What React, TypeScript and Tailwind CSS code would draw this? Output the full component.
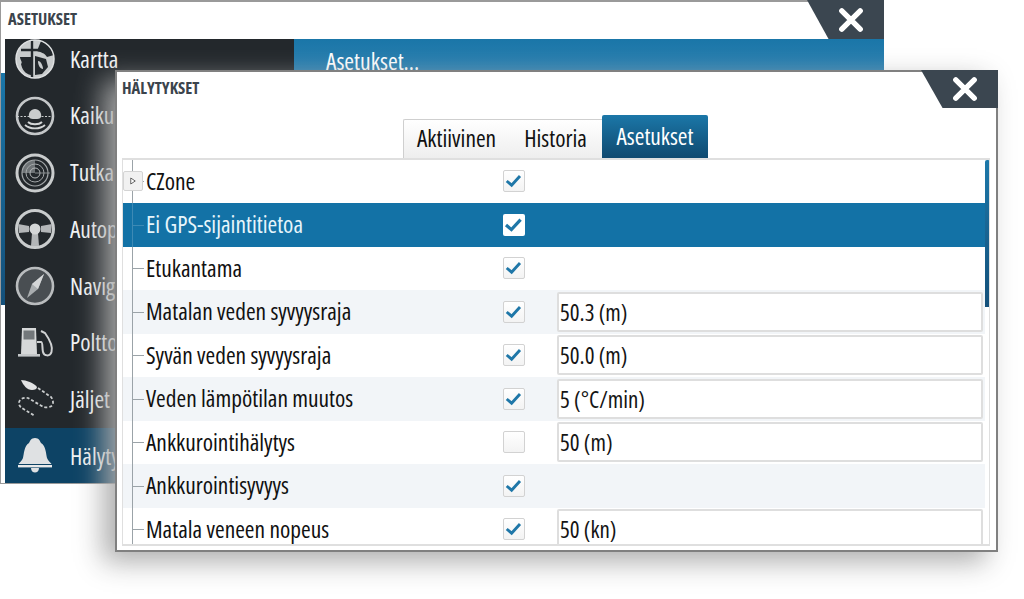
import React from 'react'

const BODY = "font-['Open_Sans','Noto_Sans',sans-serif] [font-stretch:75%]"

interface Row {
  label: string
  checked: boolean
  value?: string
}

const ROWS: Row[] = [
  { label: 'CZone', checked: true },
  { label: 'Ei GPS-sijaintitietoa', checked: true },
  { label: 'Etukantama', checked: true },
  { label: 'Matalan veden syvyysraja', checked: true, value: '50.3 (m)' },
  { label: 'Syvän veden syvyysraja', checked: true, value: '50.0 (m)' },
  { label: 'Veden lämpötilan muutos', checked: true, value: '5 (°C/min)' },
  { label: 'Ankkurointihälytys', checked: false, value: '50 (m)' },
  { label: 'Ankkurointisyvyys', checked: true },
  { label: 'Matala veneen nopeus', checked: true, value: '50 (kn)' },
]

// Sidebar icons, all drawn in a 44x44 box centred on the icon
function MapIcon() {
  return (
    <svg viewBox="0 0 44 44" className="w-[44px] h-[44px]">
      <circle cx="22" cy="22" r="19" fill="#c9cccd" />
      <path d="M28 4 C34 6 39 11 41 18 L34 20 C32 16 27 15 24 14 Z" fill="#23282c" />
      <path d="M7 20 L18 20 L18 38 C12 37 9 32 8 27 C10 25 7 23 7 20 Z" fill="#23282c" />
      <path d="M22 19 L33 22 L35 30 L29 37 L22 38 Z" fill="#23282c" />
      <path d="M25 24 C28 24 30 29 30 32 C27 32 25 28 25 24 Z" fill="#c9cccd" />
      <path d="M19 3 L19 41 M8 13 L33 13" stroke="#23282c" strokeWidth="2.4" />
      <circle cx="22" cy="22" r="19" fill="none" stroke="#dfe1e2" strokeWidth="1.5" />
    </svg>
  )
}

function SonarIcon() {
  return (
    <svg viewBox="0 0 44 44" className="w-[44px] h-[44px]">
      <circle cx="22" cy="22" r="18" fill="none" stroke="#c4c7c9" strokeWidth="2.6" />
      <path d="M16 23 C15 19 18 15 22 15 C26 15 29 19 28 23 C27 25 25 25 22 25 C19 25 17 25 16 23 Z" fill="#c9cccd" />
      <path d="M4 22.5 L40 22.5" stroke="#c9cccd" strokeWidth="1" strokeDasharray="2 1.5" />
      <path d="M15 28 C18 31 26 31 29 28 M12 31 C17 35.5 27 35.5 32 31" fill="none" stroke="#d4d6d7" strokeWidth="1.8" />
    </svg>
  )
}

function RadarIcon() {
  return (
    <svg viewBox="0 0 44 44" className="w-[44px] h-[44px]">
      <circle cx="22" cy="22" r="18" fill="none" stroke="#c9cccd" strokeWidth="3" />
      <path d="M22 22 L22 9 A13 13 0 0 0 9 22 Z" fill="#6f7477" />
      <circle cx="22" cy="22" r="13" fill="none" stroke="#a3a7a9" strokeWidth="1.2" />
      <circle cx="22" cy="22" r="9" fill="none" stroke="#a3a7a9" strokeWidth="1" />
      <circle cx="22" cy="22" r="5" fill="none" stroke="#b4b7b9" strokeWidth="1" />
      <path d="M22 22 L37 22" stroke="#9a9ea1" strokeWidth="0.8" />
    </svg>
  )
}

function WheelIcon() {
  return (
    <svg viewBox="0 0 44 44" className="w-[44px] h-[44px]">
      <circle cx="22" cy="22" r="18.5" fill="none" stroke="#c9cccd" strokeWidth="3" />
      <path d="M5 17 L16 19 L16 25 L6 26 Z M39 17 L28 19 L28 25 L38 26 Z" fill="#b3b6b8" />
      <path d="M19 26 L25 26 L26 39 L18 39 Z" fill="#b3b6b8" />
      <circle cx="22" cy="22" r="5.5" fill="#d4d6d7" />
    </svg>
  )
}

function CompassIcon() {
  return (
    <svg viewBox="0 0 44 44" className="w-[44px] h-[44px]">
      <circle cx="22" cy="22" r="18" fill="#494e52" stroke="#b9bcbe" strokeWidth="2.6" />
      <path d="M31 10 L25 25 L14 34 L19 20 Z" fill="#a9adaf" />
      <path d="M31 10 L19 20 L25 25 Z" fill="#d4d6d7" />
    </svg>
  )
}

function FuelIcon() {
  return (
    <svg viewBox="0 0 44 44" className="w-[44px] h-[44px]">
      <path d="M9 7 L23 7 L24 33 L8 33 Z" fill="#d6d8d9" />
      <rect x="10.5" y="9.5" width="11" height="9" fill="#73787b" />
      <rect x="5" y="33" width="22" height="2.6" fill="#c4c7c9" />
      <path d="M24 21 L28 21 C30 21 29 27 30 31 C31 35 37 36 38.5 31 C40 26 37 19 32 12 L28 10" fill="none" stroke="#d0d2d3" strokeWidth="2" />
    </svg>
  )
}

function TrackIcon() {
  return (
    <svg viewBox="0 0 44 44" className="w-[44px] h-[44px]">
      <path d="M8 3 C13 3 21 6 24 10 C24 12 22 13 19 13 C14 13 10 8 8 3 Z" fill="#e2e3e4" />
      <path d="M25 11 L38 20 C41 24 41 29 36 30 C33 31 30 30 27 28 L15 21 C11 20 6 22 6 26 C6 30 9 31 12 33 L22 39" fill="none" stroke="#c9cccd" strokeWidth="1.8" strokeDasharray="3 2" />
    </svg>
  )
}

function BellIcon() {
  return (
    <svg viewBox="0 0 44 44" className="w-[44px] h-[44px]">
      <path d="M22 4 C26 4 27 7 28 9 C33 12 33 20 34 24 C35 27 38 29 38.5 30 L5.5 30 C6 29 9 27 10 24 C11 20 11 12 16 9 C17 7 18 4 22 4 Z" fill="#dfe1e3" />
      <rect x="5" y="31" width="34" height="2.4" fill="#e8e9ea" />
      <path d="M18 34 L26 34 C26 37 24 38.5 22 38.5 C20 38.5 18 37 18 34 Z" fill="#dfe1e3" />
    </svg>
  )
}

const MENU = [
  { label: 'Kartta', icon: <MapIcon /> },
  { label: 'Kaiku', icon: <SonarIcon /> },
  { label: 'Tutka', icon: <RadarIcon /> },
  { label: 'Autopilotti', icon: <WheelIcon /> },
  { label: 'Navigointi', icon: <CompassIcon /> },
  { label: 'Polttoaine', icon: <FuelIcon /> },
  { label: 'Jäljet', icon: <TrackIcon /> },
  { label: 'Hälytykset', icon: <BellIcon />, active: true },
]

function CloseMark() {
  return (
    <svg viewBox="0 0 24 24" className="w-[26px] h-[26px]">
      <path d="M3.5 3.5 L20.5 20.5 M20.5 3.5 L3.5 20.5" stroke="#fff" strokeWidth="5" strokeLinecap="round" />
    </svg>
  )
}

function Checkbox({ checked, selected }: { checked: boolean; selected: boolean }) {
  return (
    <div
      className={`w-[22px] h-[22px] rounded-[2px] ${
        selected ? 'bg-white' : 'border border-[#d2d2d2] bg-gradient-to-b from-white to-[#f3f3f3]'
      }`}
    >
      {checked && (
        <svg viewBox="0 0 22 22" className="w-full h-full">
          <path d="M3 11 L8.4 15.6 L17.6 5.6" fill="none" stroke="#1f77a8" strokeWidth="3.2" />
        </svg>
      )}
    </div>
  )
}

export default function App() {
  return (
    <div className={`relative w-[1024px] h-[599px] overflow-hidden bg-white ${BODY}`}>
      {/* Back window */}
      <div className="absolute left-0 top-0 w-[884px] h-[484px] flex flex-col bg-white border-l border-t-2 border-b border-[#9a9a9a]">
        <div className="h-[37px] shrink-0 pl-[7px] pt-[7px] text-[16.5px] leading-[20px] font-bold text-[#3b444c]">ASETUKSET</div>
        <div className="flex-1 flex min-h-0">
          <div className="w-[4px] shrink-0 pt-[34px]">
            <div className="h-[232px] bg-gradient-to-b from-[#1a76a8] to-[#14507a]" />
          </div>
          <div className="w-[289px] shrink-0 bg-[#23282c] overflow-hidden">
            <div className="-mt-[8px]">
              {MENU.map((m) => (
                <div
                  key={m.label}
                  className={`h-[56.7px] flex items-center pl-[8px] gap-[13px] text-[23.4px] text-[#f1f3f4] ${
                    m.active ? 'bg-[#0d4365]' : ''
                  }`}
                >
                  {m.icon}
                  <span>{m.label}</span>
                </div>
              ))}
            </div>
          </div>
          <div className="flex-1">
            <div className="h-[31px] pl-[32px] pt-[6px] text-[23.6px] leading-[32px] text-white bg-gradient-to-b from-[#1a76a8] to-[#2a80b1]">
              Asetukset...
            </div>
          </div>
        </div>
        <div className="absolute right-0 -top-[2px] w-[77px] h-[39px] flex items-center justify-center pl-[11px] bg-[#3b4650] [clip-path:polygon(0_0,100%_0,100%_100%,28%_100%)]">
          <CloseMark />
        </div>
      </div>

      {/* Front window */}
      <div className="absolute left-[115px] top-[70px] w-[883px] h-[482px] flex flex-col bg-white border-2 border-[#808080] shadow-[-12px_10px_26px_rgba(170,170,170,0.95)]">
        <div className="h-[43px] shrink-0 pl-[5px] pt-[6px] text-[16.5px] leading-[20px] font-bold text-[#3b444c]">HÄLYTYKSET</div>
        <div className="h-[43px] shrink-0 flex items-end pl-[286px] text-[23.4px] text-[#111]">
          <div className="h-[39px] w-[199px] flex items-center pl-[13px] gap-[28px] rounded-tl-[2px] border-l border-t border-[#cfcfcf] bg-gradient-to-b from-white to-[#eeeeee]">
            <span>Aktiivinen</span>
            <span>Historia</span>
          </div>
          <div className="h-[43px] w-[106px] flex items-center justify-center rounded-t-[2px] text-white bg-gradient-to-b from-[#1b77a8] to-[#104a70]">
            Asetukset
          </div>
        </div>
        <div className="ml-[5px] w-[868px] h-[388px] flex overflow-hidden border-t-2 border-l border-b-2 border-r border-[#dfdfdf]">
          <div className="w-[862px] shrink-0 -mt-[0.5px]">
            {ROWS.map((r, i) => {
              const selected = i === 1
              const striped = i === 3 || i === 5 || i === 7
              return (
                <div
                  key={r.label}
                  className={`relative h-[43.5px] flex items-center ${
                    selected ? 'bg-[#1372a6] text-[#e6f5fb]' : striped ? 'bg-[#f2f5f8] text-[#111]' : 'text-[#111]'
                  }`}
                >
                  <div className={`absolute left-[9px] inset-y-0 w-px ${selected ? 'bg-[#3d8ab5]' : 'bg-[#9ba3a8]'}`} />
                  <div className={`absolute left-[9px] top-1/2 w-[12px] h-px ${selected ? 'bg-[#3d8ab5]' : 'bg-[#9ba3a8]'}`} />
                  {i === 0 && (
                    <div className="absolute left-0 top-[11px] w-[20px] h-[20px] flex items-center justify-center rounded-[2px] border border-[#d4d4d4] bg-[#f1f1f1]">
                      <svg viewBox="0 0 8 10" className="w-[6px] h-[8px]">
                        <path d="M1 1 L7 5 L1 9 Z" fill="#fff" stroke="#555" strokeWidth="1.2" />
                      </svg>
                    </div>
                  )}
                  <div className="w-[380px] pl-[23px] shrink-0 text-[23.4px] whitespace-nowrap">{r.label}</div>
                  <Checkbox checked={r.checked} selected={selected} />
                  {r.value && (
                    <div className="ml-[32px] w-[426px] h-[40px] flex items-center pl-[1px] rounded-[2px] border-2 border-[#dedede] bg-white text-[23px] text-[#151515]">
                      {r.value}
                    </div>
                  )}
                </div>
              )
            })}
          </div>
          <div className="w-[5px] shrink-0">
            <div className="h-[147px] bg-gradient-to-b from-[#1d78a9] to-[#14507a] rounded-t-[2px]" />
          </div>
        </div>
        <div className="absolute -right-[2px] -top-[2px] w-[77px] h-[38px] flex items-center justify-center pl-[11px] bg-[#3b4650] [clip-path:polygon(0_0,100%_0,100%_100%,28%_100%)]">
          <CloseMark />
        </div>
      </div>
    </div>
  )
}
